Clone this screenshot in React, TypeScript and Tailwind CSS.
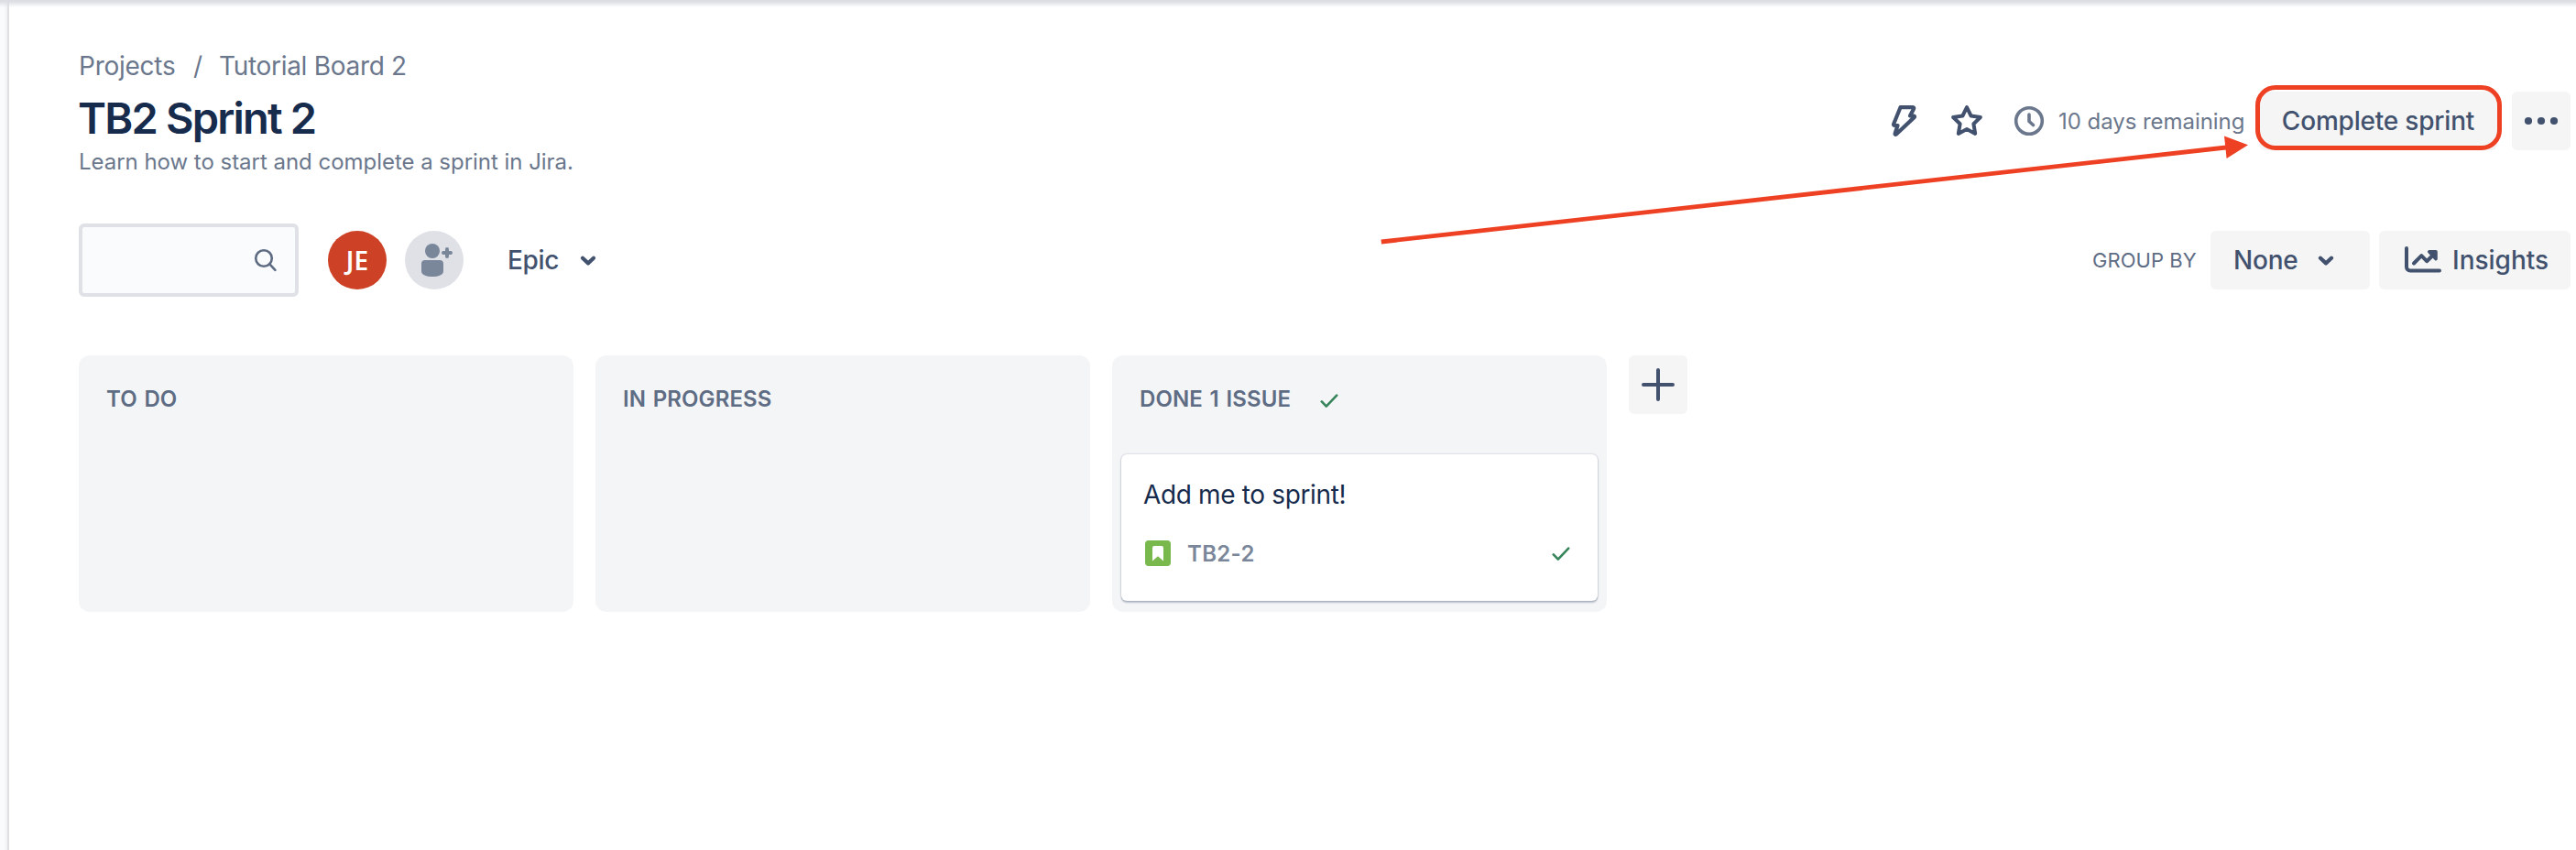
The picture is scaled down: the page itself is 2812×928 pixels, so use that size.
import React from "react";

function Chevron() {
  return (
    <svg width="32" height="32" viewBox="0 0 32 32" fill="none" stroke="#42526e" strokeWidth="4.2" strokeLinecap="round" strokeLinejoin="round">
      <path d="M10 13.8l6 5.6 6-5.6" />
    </svg>
  );
}

function Check() {
  return (
    <svg width="20" height="16" viewBox="0 0 20 16" fill="none" stroke="#36855a" strokeWidth="2.6" strokeLinecap="round" strokeLinejoin="round">
      <path d="M1.8 8.4l5 5.2L18.2 1.6" />
    </svg>
  );
}

function Column({ title, children, done }: { title: string; children?: React.ReactNode; done?: boolean }) {
  return (
    <section className="flex h-[280px] w-[540px] flex-col rounded-xl bg-[#f4f5f7] px-[10px]">
      <div className="flex h-[108px] items-start pt-8 pl-5">
        <h2 className="min-w-[168px] text-2xl leading-8 font-semibold tracking-[0.1px] [word-spacing:1.5px] whitespace-nowrap text-[#5e6c84]">{title}</h2>
        {done && <div className="mt-[10px] ml-[29px]"><Check /></div>}
      </div>
      {children}
    </section>
  );
}

export default function App() {
  return (
    <div className="relative flex h-[928px] w-[2812px] overflow-hidden bg-white font-['Inter','Liberation_Sans',sans-serif] text-[#42526e]">
      <div className="w-[10px] shrink-0 border-r-2 border-[#e0e0e4] bg-linear-to-r from-[#fafbfc] from-50% to-[#eff0f3]" />
      <main className="flex w-[2802px] shrink-0 flex-col pl-[76px]">
        <header className="flex h-[244px] justify-between pt-[54px] pr-[6px]">
          <div className="text-[#6b778c]">
            <nav className="flex h-9 text-[28px] leading-9 whitespace-nowrap">
              <span className="w-[125px] tracking-[-0.25px]">Projects</span>
              <span className="w-[28px]">/</span>
              <span className="tracking-[-0.3px]">Tutorial Board 2</span>
            </nav>
            <h1 className="mt-[11px] -ml-px h-14 text-[47px] leading-14 font-semibold tracking-[-1.8px] whitespace-nowrap text-[#172b4d]">TB2 Sprint 2</h1>
            <p className="mt-1 text-2xl leading-8 tracking-[-0.03px] whitespace-nowrap">Learn how to start and complete a sprint in Jira.</p>
          </div>
          <div className="mt-[46px] flex h-16 items-center">
            <svg width="32" height="40" viewBox="1 0 32 40" fill="none" stroke="#42526e" strokeWidth="4.2" strokeLinejoin="round" strokeLinecap="round">
              <path d="M11.5 5.2H25.2a1 1 0 0 1 .9 1.5L22 14.5h4.2a.8.8 0 0 1 .6 1.4L6.8 34.7c-.6.5-1.4 0-1.2-.8L8.5 25H5.2c-.9 0-1.4-.7-1.1-1.5z" />
            </svg>
            <svg className="ml-[33px]" width="36" height="36" viewBox="0 0 36 36" fill="none" stroke="#42526e" strokeWidth="4" strokeLinejoin="round">
              <path d="M18 3.1l4.6 9.4 10.3 1.5-7.5 7.3 1.8 10.6-9.2-4.9-9.2 4.9 1.8-10.6L3.1 14l10.3-1.5z" />
            </svg>
            <svg className="ml-[33px]" width="34" height="34" viewBox="0 0 34 34" fill="none" stroke="#6b778c" strokeWidth="3.6" strokeLinecap="round" strokeLinejoin="round">
              <circle cx="17" cy="17" r="14.3" />
              <path d="M17 10v7.5l4.5 4" />
            </svg>
            <span className="mt-[2px] ml-[15px] w-[219px] text-2xl tracking-[-0.05px] whitespace-nowrap text-[#6b778c]">10 days remaining</span>
            <button className="h-16 w-[260px] rounded-md bg-[#f5f5f5] text-[28px] font-medium tracking-[-0.2px] whitespace-nowrap">Complete sprint</button>
            <button className="ml-4 flex h-16 w-16 items-center justify-center rounded-md bg-[#f5f5f5]">
              <svg width="40" height="10" viewBox="0 0 40 10" fill="#42526e">
                <circle cx="6" cy="5" r="4.1" /><circle cx="20" cy="5" r="4.1" /><circle cx="34" cy="5" r="4.1" />
              </svg>
            </button>
          </div>
        </header>

        <div className="flex h-20 items-center justify-between pr-[6px]">
          <div className="flex items-center">
            <div className="flex h-20 w-[240px] items-center justify-end rounded-md border-4 border-[#dfe1e6] bg-[#fafbfc] pr-[19px]">
              <svg width="26" height="26" viewBox="0 0 26 26" fill="none" stroke="#5e6c84" strokeWidth="2.6" strokeLinecap="round">
                <circle cx="11" cy="11" r="8.8" /><path d="M17.4 17.4l6 6.4" />
              </svg>
            </div>
            <div className="ml-8 flex h-16 w-16 items-center justify-center rounded-full bg-[#cd4226] pb-px font-['Noto_Sans',sans-serif] text-[28px] leading-none font-semibold text-white">JE</div>
            <div className="ml-5 h-16 w-16 rounded-full bg-[#dfe1e6]">
              <svg width="64" height="64" viewBox="0 0 64 64" fill="#7a869a">
                <circle cx="30" cy="22" r="8" />
                <path d="M18 36a4 4 0 0 1 4-4h16a4 4 0 0 1 4 4v8c0 4-5.4 6-12 6s-12-2-12-6z" />
                <path d="M46 20v8M42 24h8" stroke="#7a869a" strokeWidth="4" strokeLinecap="round" />
              </svg>
            </div>
            <span className="ml-12 w-[72px] text-[28px] font-medium tracking-[-0.3px]">Epic</span>
            <Chevron />
          </div>
          <div className="flex items-center">
            <span className="w-[129px] text-[22px] tracking-[0.05px] whitespace-nowrap text-[#5e6c84]">GROUP BY</span>
            <button className="flex h-16 w-[174px] items-center rounded-md bg-[#f5f5f5] pl-[25px] text-[28px] font-medium">
              <span className="w-[85px] text-left tracking-[-0.2px]">None</span>
              <Chevron />
            </button>
            <button className="ml-[10px] flex h-16 w-[209px] items-center rounded-md bg-[#f5f5f5] pl-[28px] text-[28px] font-medium">
              <svg width="40" height="30" viewBox="0 0 40 30" fill="none" stroke="#42526e" strokeWidth="4" strokeLinecap="round" strokeLinejoin="round">
                <path d="M2 2v20.5a4 4 0 0 0 4 4h32M10 18.5l8.3-8.3 5.8 6L33 7.5" />
                <path d="M26.7 5.8h7.4v8z" fill="#42526e" strokeWidth="3.4" />
              </svg>
              <span className="ml-[12px]">Insights</span>
            </button>
          </div>
        </div>

        <div className="mt-16 flex gap-6">
          <Column title="TO DO" />
          <Column title="IN PROGRESS" />
          <Column title="DONE 1 ISSUE" done>
            <article className="flex h-40 flex-col rounded-md bg-white pr-[30px] pl-6 shadow-[0_2px_2px_rgba(9,30,66,0.25),0_0_2px_rgba(9,30,66,0.31)]">
              <h3 className="mt-6 text-[28px] leading-10 tracking-[-0.35px] whitespace-nowrap text-[#172b4d]">Add me to sprint!</h3>
              <div className="mt-[26px] flex h-9 items-center">
                <svg className="ml-[2px]" width="28" height="28" viewBox="0 0 28 28">
                  <rect width="28" height="28" rx="4" fill="#79b84c" />
                  <path d="M8 8a2 2 0 0 1 2-2h8a2 2 0 0 1 2 2v14.5l-6-5.2-6 5.2z" fill="#fff" />
                </svg>
                <span className="mt-px ml-[18px] text-2xl font-semibold tracking-[0.3px] text-[#7a869a]">TB2-2</span>
                <div className="mt-px ml-auto"><Check /></div>
              </div>
            </article>
          </Column>
          <button className="flex h-16 w-16 items-center justify-center rounded-md bg-[#f5f5f5]">
            <svg width="36" height="36" viewBox="0 0 36 36" stroke="#42526e" strokeWidth="4" strokeLinecap="round"><path d="M18 2v32M2 18h32" /></svg>
          </button>
        </div>
      </main>

      <div className="absolute inset-x-0 top-0 h-2 bg-linear-to-b from-[#dcdee4] from-20% to-transparent" />
      <div className="absolute top-[93px] left-[2462px] h-[71px] w-[269px] rounded-[22px] border-5 border-[#ee4023]" />
      <svg className="absolute top-[140px] left-[1500px]" width="960" height="140" viewBox="0 0 960 140">
        <path d="M7.8 124L930 21" stroke="#ee4023" strokeWidth="4.8" />
        <path d="M954 18.3l-26-9.8 2.6 24.6z" fill="#ee4023" />
      </svg>
    </div>
  );
}
